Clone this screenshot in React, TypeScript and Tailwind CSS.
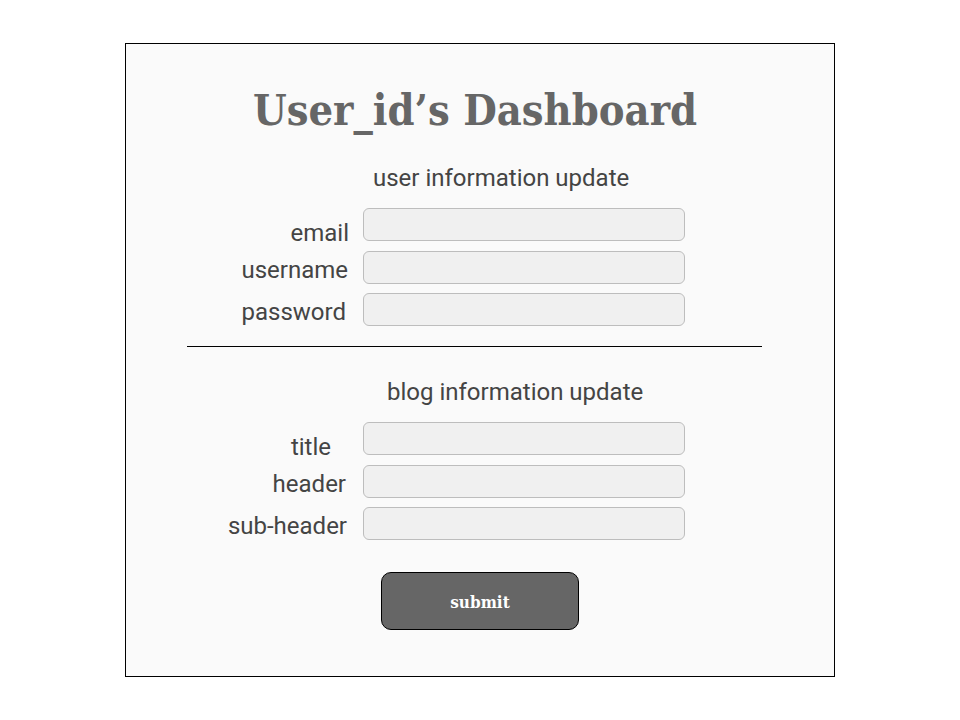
import React from "react";

const sans = { fontFamily: "Roboto, 'Liberation Sans', sans-serif" };
const slab = { fontFamily: "'DejaVu Serif Condensed', 'DejaVu Serif', serif" };

interface FieldRowProps {
  label: string;
  labelClass?: string;
}

function FieldRow({ label, labelClass = "" }: FieldRowProps) {
  return (
    <div className="flex items-end">
      <label
        className={`w-[224px] text-right text-[24px] leading-[28px] text-[#444] ${labelClass}`}
      >
        {label}
      </label>
      <input
        type="text"
        className="ml-[13px] h-[33px] w-[322px] rounded-[6px] border border-[#bdbdbd] bg-[#f0f0f0] outline-none"
      />
    </div>
  );
}

export default function App() {
  return (
    <div className="min-h-screen bg-white pt-[43px]" style={sans}>
      <div className="mx-auto flex h-[634px] w-[710px] flex-col border border-black bg-[#fafafa]">
        {/* Title */}
        <h1
          className="mt-[39px] pr-[10px] text-center text-[43px] font-bold leading-[54px] text-[#666] font-stretch-condensed"
          style={slab}
        >
          User_id’s Dashboard
        </h1>

        {/* User info */}
        <h2 className="ml-[247px] mt-[27px] text-[24px] leading-[28px] text-[#444]">
          user information update
        </h2>
        <div className="mt-[16px] flex flex-col gap-[9.5px]">
          <FieldRow label="email" labelClass="-mb-[6px] pr-[1px]" />
          <FieldRow label="username" labelClass="pr-[2px]" />
          <FieldRow label="password" labelClass="pr-[4px]" />
        </div>

        <div className="ml-[61px] mt-[20px] h-px w-[575px] bg-black" />

        {/* Blog info */}
        <h2 className="ml-[261px] mt-[31px] text-[24px] leading-[28px] text-[#444]">
          blog information update
        </h2>
        <div className="mt-[16px] flex flex-col gap-[9.5px]">
          <FieldRow label="title" labelClass="-mb-[6px] pr-[19px]" />
          <FieldRow label="header" labelClass="pr-[4px]" />
          <FieldRow label="sub-header" labelClass="pr-[3px]" />
        </div>

        <button
          className="ml-[255px] mt-[32px] h-[58px] w-[198px] rounded-[10px] border border-black bg-[#666] pt-[3px] text-[17px] font-bold text-white font-stretch-condensed"
          style={slab}
        >
          submit
        </button>
      </div>
    </div>
  );
}
